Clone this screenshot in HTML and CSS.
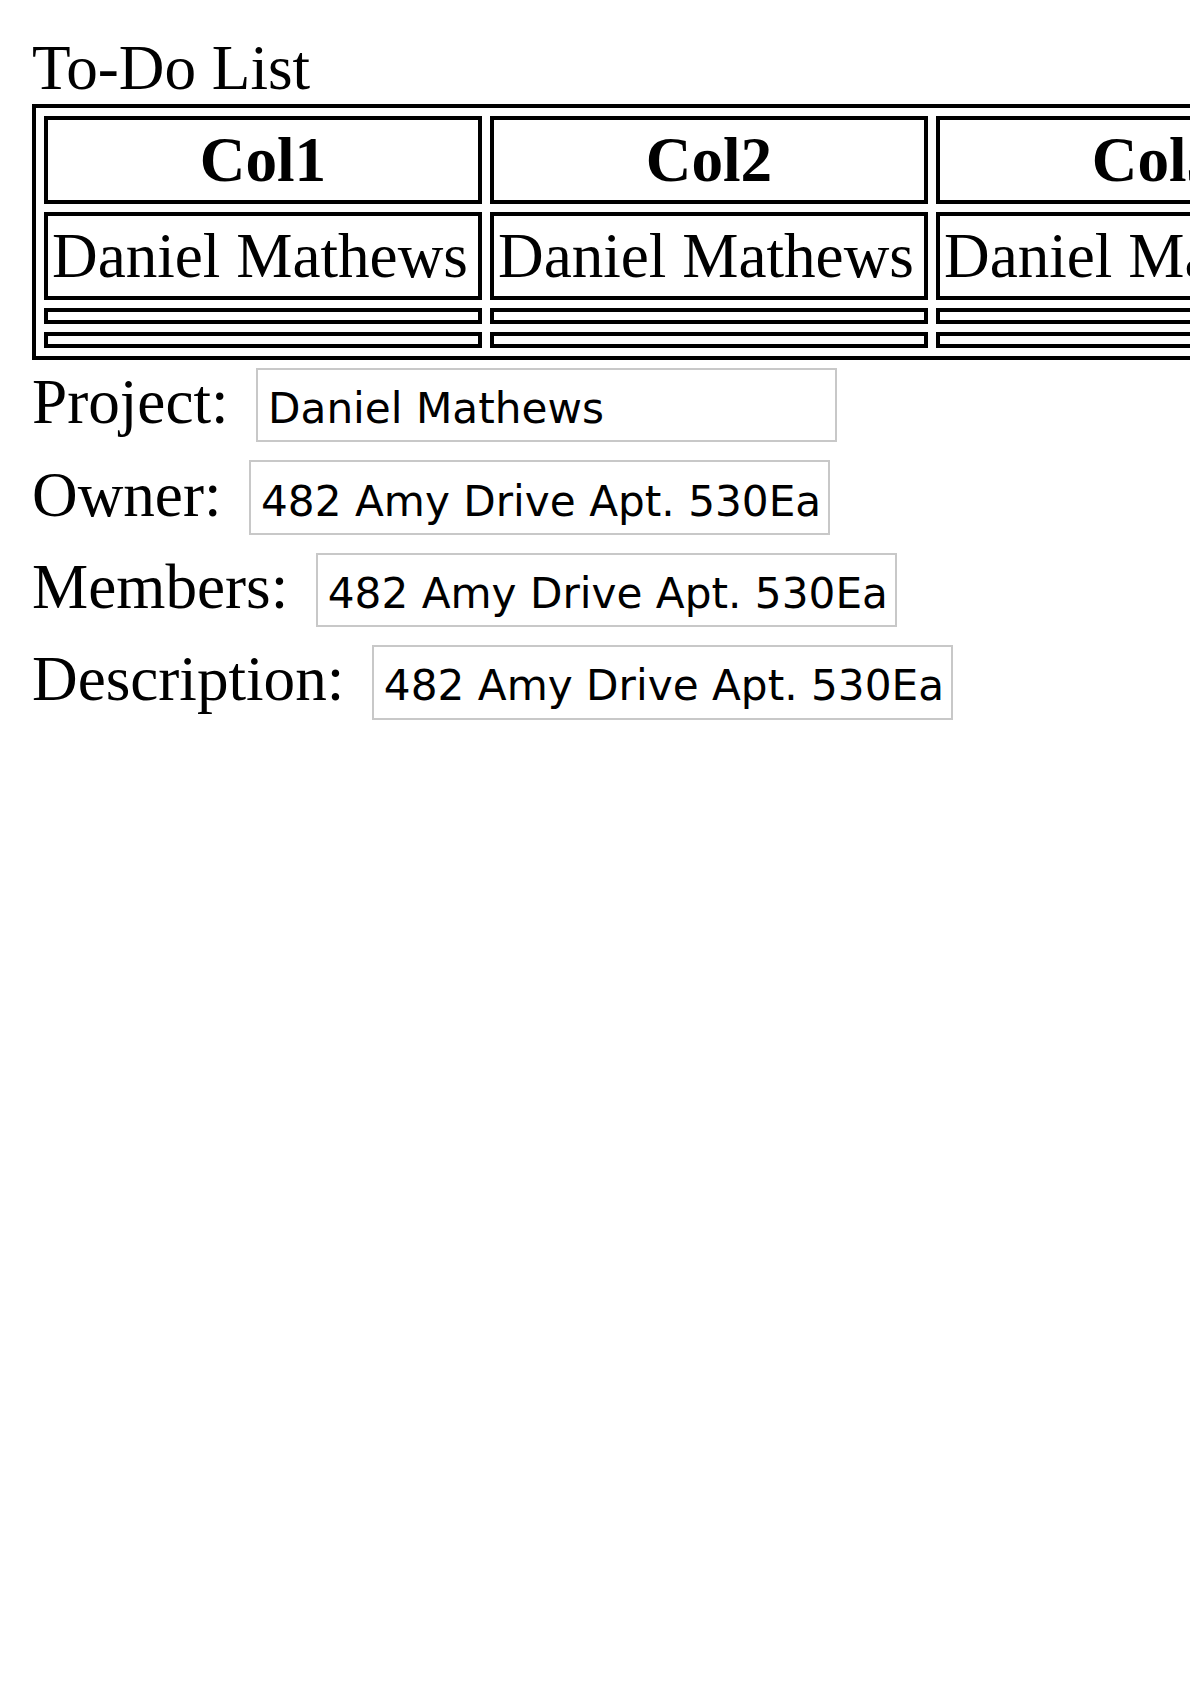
FILE: index.html
```html
<!DOCTYPE html>
<html lang="en">
<head>
<meta charset="utf-8">
<title>To-Do List</title>
<link rel="stylesheet" href="styles.css">
</head>
<body>
<div class="title">To-Do List</div>
<table class="todo">
  <thead>
    <tr><th>Col1</th><th>Col2</th><th>Col3</th></tr>
  </thead>
  <tbody>
    <tr><td>Daniel Mathews</td><td>Daniel Mathews</td><td>Daniel Mathews</td></tr>
    <tr><td></td><td></td><td></td></tr>
    <tr><td></td><td></td><td></td></tr>
  </tbody>
</table>
<form class="details">
  <div class="field"><label class="field-label" for="project">Project:</label><input class="field-input" id="project" type="text" value="Daniel Mathews"></div>
  <div class="field"><label class="field-label" for="owner">Owner:</label><input class="field-input" id="owner" type="text" value="482 Amy Drive Apt. 530East Jessica, NM 28371"></div>
  <div class="field"><label class="field-label" for="members">Members:</label><input class="field-input" id="members" type="text" value="482 Amy Drive Apt. 530East Jessica, NM 28371"></div>
  <div class="field"><label class="field-label" for="description">Description:</label><input class="field-input" id="description" type="text" value="482 Amy Drive Apt. 530East Jessica, NM 28371"></div>
</form>
</body>
</html>
```
FILE: styles.css
```css
body {
  margin: 32px 0 0 32px;
  font-family: "Liberation Serif", "Times New Roman", serif;
  font-size: 63.2px;
  line-height: 72px;
  color: #000;
  background: #fff;
  overflow-x: hidden;
}

.title {
  margin: 0;
}

.todo {
  border: 4px solid #000;
  border-spacing: 8px;
  width: 1354px;
  table-layout: fixed;
}

.todo th,
.todo td {
  border: 4px solid #000;
  padding: 4px;
  width: 422px;
  white-space: nowrap;
  overflow: hidden;
}

.todo th {
  font-weight: bold;
  text-align: center;
}

.todo td {
  text-align: left;
}

.details {
  margin: 0;
}

.field {
  display: flex;
  align-items: baseline;
}

.field-label {
  white-space: nowrap;
}

.field-input {
  margin: 8px 0 10px 27.5px;
  width: 581px;
  height: 74.4px;
  box-sizing: border-box;
  border: 2px solid #c8c8c8;
  border-radius: 0;
  padding: 7px 6px 0 10px;
  font-family: "DejaVu Sans", "Liberation Sans", sans-serif;
  font-size: 42.2px;
  color: #000;
  background: #fff;
  outline: none;
}
```
